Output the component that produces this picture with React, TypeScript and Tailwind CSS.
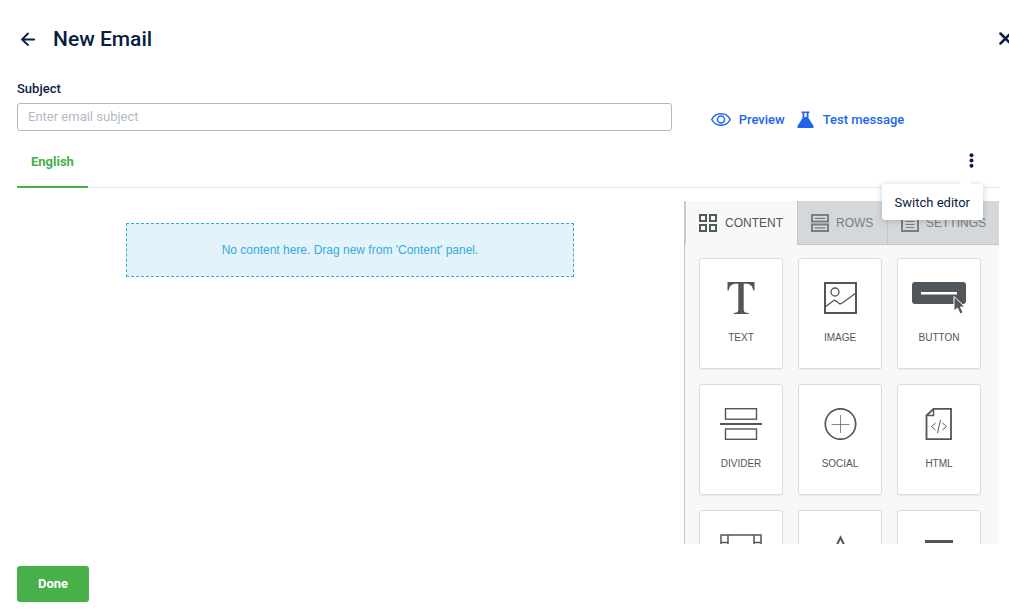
import type { ReactNode } from "react";

const ink = "#505659";

function TextIcon() {
  return (
    <svg width="28" height="32" viewBox="0 0 28 32" fill={ink} aria-hidden="true">
      <path d="M0.500 0H27.500V8.500H26.300C25.300 4 23.500 1.800 19 1.800H16.700V28C16.700 30 18.300 30.900 21.500 31V32H6.500V31C9.700 30.900 11.300 30 11.300 28V1.800H9C4.500 1.800 2.700 4 1.700 8.500H0.500Z" />
    </svg>
  );
}

function ImageIcon() {
  return (
    <svg width="34" height="32" viewBox="0 0 34 32" fill="none" stroke={ink} aria-hidden="true">
      <rect x="2" y="1" width="31" height="30" strokeWidth="2" />
      <circle cx="12" cy="10" r="4" strokeWidth="1.300" />
      <path d="M2 25L11.500 18L17 22L20 20.500L33 11" strokeWidth="1.300" />
    </svg>
  );
}

function ButtonIcon() {
  return (
    <svg width="54" height="32" viewBox="0 0 54 32" aria-hidden="true">
      <rect width="54" height="22" rx="3" fill={ink} />
      <rect x="9" y="10" width="36" height="2.500" fill="#fff" />
      <path d="M42 14.500V29L45.600 26L48 32L51 30.500L48.500 25H53Z" fill={ink} stroke="#fff" strokeWidth="1" />
    </svg>
  );
}

function DividerIcon() {
  return (
    <svg width="42" height="32" viewBox="0 0 42 32" fill="none" stroke={ink} aria-hidden="true">
      <rect x="5.500" y="0.700" width="31" height="10.500" strokeWidth="1.400" />
      <path d="M0 16H42" strokeWidth="2" />
      <rect x="5.500" y="21" width="31" height="10.300" strokeWidth="1.400" />
    </svg>
  );
}

function SocialIcon() {
  return (
    <svg width="34" height="32" viewBox="0 0 34 32" fill="none" stroke={ink} aria-hidden="true">
      <circle cx="17.500" cy="16" r="15.200" strokeWidth="1.700" />
      <path d="M8.500 16.500H26.500M17.500 7V25" strokeWidth="1" strokeOpacity="0.700" />
    </svg>
  );
}

function HtmlIcon() {
  return (
    <svg width="28" height="32" viewBox="0 0 28 32" fill="none" stroke={ink} aria-hidden="true">
      <path d="M8.500 0.900H26V31.100H1.500V7.500Z" strokeWidth="1.800" />
      <path d="M8.500 1V7.500H2" strokeWidth="1.500" />
      <path d="M10.500 15L6.500 18.500L10.500 22M17.500 15L21.500 18.500L17.500 22M15.500 12L12.500 25" strokeWidth="1" />
    </svg>
  );
}

function VideoIcon() {
  return (
    <svg width="42" height="32" viewBox="0 0 42 32" fill="none" stroke={ink} strokeWidth="1.500" aria-hidden="true">
      <path d="M1 1H41V31H1ZM8 1V31M34 1V31M1 8.500H8M1 16H8M1 23.500H8M34 8.500H41M34 16H41M34 23.500H41" />
    </svg>
  );
}

function ShapesIcon() {
  return (
    <svg width="34" height="32" viewBox="0 0 34 32" fill="none" stroke={ink} strokeWidth="2" aria-hidden="true">
      <path d="M17.500 3.500L23.500 16H11.500ZM4 18H14V30H4Z" />
      <circle cx="25" cy="24" r="6" />
    </svg>
  );
}

function MenuIcon() {
  return (
    <svg width="28" height="32" viewBox="0 0 28 32" stroke={ink} strokeWidth="3" aria-hidden="true">
      <path d="M0 7.500H28M0 16.500H28M0 25.500H28" />
    </svg>
  );
}

const blocks: { id: string; label?: string; icon: ReactNode }[] = [
  { id: "text", label: "TEXT", icon: <TextIcon /> },
  { id: "image", label: "IMAGE", icon: <ImageIcon /> },
  { id: "button", label: "BUTTON", icon: <ButtonIcon /> },
  { id: "divider", label: "DIVIDER", icon: <DividerIcon /> },
  { id: "social", label: "SOCIAL", icon: <SocialIcon /> },
  { id: "html", label: "HTML", icon: <HtmlIcon /> },
  { id: "video", icon: <VideoIcon /> },
  { id: "icons", icon: <ShapesIcon /> },
  { id: "menu", icon: <MenuIcon /> },
];

function ContentTabIcon() {
  return (
    <svg width="18" height="18" viewBox="0 0 18 18" fill="none" stroke="#505c60" strokeWidth="2" aria-hidden="true">
      <path d="M1 1H7V7H1ZM11 1H17V7H11ZM1 11H7V17H1ZM11 11H17V17H11Z" />
    </svg>
  );
}

function RowsTabIcon() {
  return (
    <svg width="18" height="18" viewBox="0 0 18 18" fill="none" stroke="currentColor" aria-hidden="true">
      <path d="M1 1H17V7.500H1ZM1 10.500H17V17H1Z" strokeWidth="2" />
      <path d="M4 4.300H14M4 13.800H14" strokeWidth="1.300" />
    </svg>
  );
}

function SettingsTabIcon() {
  return (
    <svg width="18" height="18" viewBox="0 0 18 18" fill="none" stroke="currentColor" aria-hidden="true">
      <path d="M1 1H17V17H1Z" strokeWidth="2" />
      <path d="M4.500 4.500H13.500M4.500 7.500H13.500M4.500 10.500H13.500M4.500 13.500H13.500" strokeWidth="1" />
    </svg>
  );
}

export default function App() {
  return (
    <main className="flex h-screen flex-col overflow-hidden bg-white pr-[10px] pb-3 pl-[17px] font-[Roboto,sans-serif] text-[13px] text-[#091e42]">
      <header className="flex shrink-0 items-center pt-[25px]">
        <button type="button" aria-label="Back" className="ml-1">
          <svg width="14" height="14" viewBox="0 0 14 14" fill="none" stroke="currentColor" strokeWidth="1.800" strokeLinecap="round" strokeLinejoin="round" aria-hidden="true">
            <path d="M13.200 7.500H1M7 1.500L1 7.500L7 13" />
          </svg>
        </button>
        <h1 className="ml-[18px] text-[21px] leading-7 font-medium">New Email</h1>
        <button type="button" aria-label="Close" className="-mr-[13px] mb-0.5 ml-auto">
          <svg width="13" height="13" viewBox="0 0 13 13" fill="none" stroke="currentColor" strokeWidth="2.500" strokeLinecap="round" aria-hidden="true">
            <path d="M1.500 1.500L11.500 11.500M11.500 1.500L1.500 11.500" />
          </svg>
        </button>
      </header>

      <section className="mt-[27px] flex shrink-0 items-end">
        <div className="w-2/3">
          <label htmlFor="subject" className="block leading-[18px] font-medium">
            Subject
          </label>
          <input
            id="subject"
            type="text"
            placeholder="Enter email subject"
            className="mt-[5px] block h-7 w-full rounded-[3px] border border-[#b3b8c4] bg-white px-[10px] pb-0.5 placeholder:text-[#b3b9c6] focus:outline-none"
          />
        </div>
        <div className="mb-0.5 ml-[39px] flex items-center gap-3 text-[#2166ea]">
          <button type="button" className="flex items-center gap-2 font-medium">
            <svg width="20" height="16" viewBox="0 0 20 16" fill="none" stroke="currentColor" strokeWidth="1.500" aria-hidden="true">
              <path d="M0.800 8.500C4.500 0.800 15.500 0.800 19.200 8.500C15.500 16.200 4.500 16.200 0.800 8.500Z" />
              <circle cx="10" cy="8.500" r="3.500" />
            </svg>
            Preview
          </button>
          <button type="button" className="flex items-center gap-[9px] font-medium">
            <svg width="17" height="17" viewBox="0 0 17 17" fill="currentColor" aria-hidden="true">
              <path d="M4.500 0.500H12.500V2H11.500V7L16.500 15C17 16.200 16.700 17 15.500 17H1.500C0.300 17 0 16.200 0.500 15L5.500 7V2H4.500Z" />
              <path d="M7.300 2H9.700V6H7.300Z" fill="#fff" />
            </svg>
            Test message
          </button>
        </div>
      </section>

      <nav className="relative mt-1 flex h-[53px] shrink-0 items-stretch justify-between border-b border-[#e4e5e7]">
        <button type="button" className="-mb-px border-b-2 border-[#48b048] px-[14px] pt-0.5 font-bold text-[#48b048]">
          English
        </button>
        <button type="button" aria-label="More options" className="mr-[25px] h-[51px]">
          <svg width="5" height="15" viewBox="0 0 5 15" fill="currentColor" aria-hidden="true">
            <circle cx="2.500" cy="2.200" r="2" />
            <circle cx="2.500" cy="7.500" r="2" />
            <circle cx="2.500" cy="12.800" r="2" />
          </svg>
        </button>
        <div role="menu" className="absolute top-[49px] right-4 z-10 rounded-[3px] bg-white shadow-[0_1px_6px_rgba(9,30,66,0.22)]">
          <span className="absolute -top-1 right-[14px] size-2 rotate-45 bg-white" />
          <button type="button" role="menuitem" className="relative block h-9 px-[13px] pt-0.5">
            Switch editor
          </button>
        </div>
      </nav>

      <section className="mt-[13px] flex min-h-0 flex-1 font-['Liberation_Sans',Arial,sans-serif]">
        <div className="flex-1 pt-[22px] pr-[110px] pl-[109px]">
          <p className="flex h-[54px] items-center justify-center border border-dashed border-[#30ace0] bg-[#e2f3fb] text-[12px] text-[#34abe0]">
            No content here. Drag new from 'Content' panel.
          </p>
        </div>
        <aside className="w-[315px] overflow-hidden border-l border-[#c4c6c8] bg-[#f8f8f8] text-[#505659]">
          <div className="flex h-11 text-[12px]">
            <button type="button" className="flex w-[112px] items-center gap-2 border-l border-[#c9cccd] pl-[13px]">
              <ContentTabIcon />
              CONTENT
            </button>
            <button type="button" className="flex w-[90px] items-center gap-[7px] border-b border-l border-[#c5c8ca] bg-[#d5d8db] pl-[13px] text-[#7d7d7d]">
              <RowsTabIcon />
              ROWS
            </button>
            <button type="button" className="flex flex-1 items-center gap-[7px] border-b border-l border-[#c5c8ca] bg-[#d5d8db] pl-[13px] text-[#7d7d7d]">
              <SettingsTabIcon />
              SETTINGS
            </button>
          </div>
          <div className="grid grid-cols-3 gap-x-[15px] gap-y-[15px] pt-[13px] pr-[18px] pl-[14px]">
            {blocks.map((block) => (
              <button
                key={block.id}
                type="button"
                aria-label={block.id}
                className="flex h-[111px] flex-col items-center rounded-[3px] border border-[#dcdcdc] bg-white pt-[23px] text-[10px] shadow-[0_1px_1px_rgba(0,0,0,0.06)]"
              >
                {block.icon}
                {block.label && <span className="mt-[17px] leading-[14px]">{block.label}</span>}
              </button>
            ))}
          </div>
        </aside>
      </section>

      <footer className="mt-[22px] shrink-0">
        <button type="button" className="h-9 rounded-[3px] bg-[#48b048] px-[21px] font-bold text-white">
          Done
        </button>
      </footer>
    </main>
  );
}
